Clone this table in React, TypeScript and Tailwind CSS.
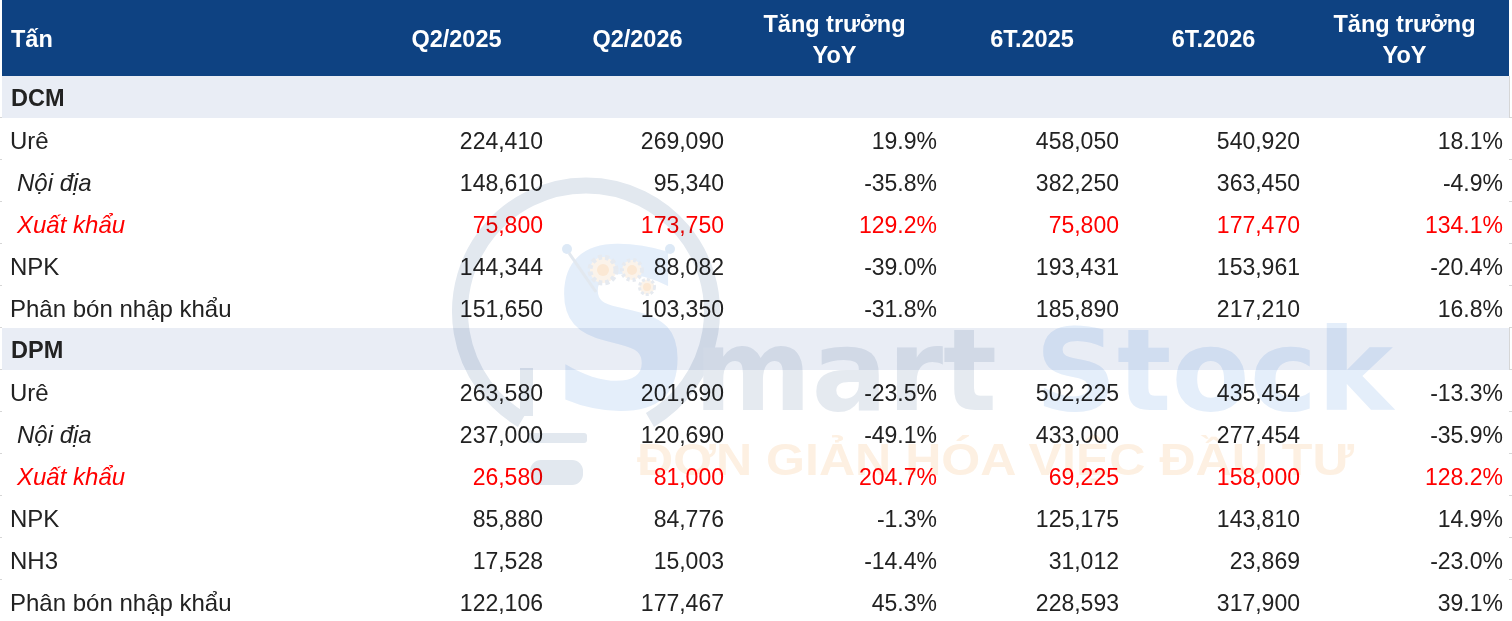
import React from "react";

type Row = {
  label: string;
  vals: string[];
  kind?: "italic" | "red";
};

type Section = { name: string; rows: Row[] };

const sections: Section[] = [
  {
    name: "DCM",
    rows: [
      { label: "Urê", vals: ["224,410", "269,090", "19.9%", "458,050", "540,920", "18.1%"] },
      { label: "Nội địa", kind: "italic", vals: ["148,610", "95,340", "-35.8%", "382,250", "363,450", "-4.9%"] },
      { label: "Xuất khẩu", kind: "red", vals: ["75,800", "173,750", "129.2%", "75,800", "177,470", "134.1%"] },
      { label: "NPK", vals: ["144,344", "88,082", "-39.0%", "193,431", "153,961", "-20.4%"] },
      { label: "Phân bón nhập khẩu", vals: ["151,650", "103,350", "-31.8%", "185,890", "217,210", "16.8%"] },
    ],
  },
  {
    name: "DPM",
    rows: [
      { label: "Urê", vals: ["263,580", "201,690", "-23.5%", "502,225", "435,454", "-13.3%"] },
      { label: "Nội địa", kind: "italic", vals: ["237,000", "120,690", "-49.1%", "433,000", "277,454", "-35.9%"] },
      { label: "Xuất khẩu", kind: "red", vals: ["26,580", "81,000", "204.7%", "69,225", "158,000", "128.2%"] },
      { label: "NPK", vals: ["85,880", "84,776", "-1.3%", "125,175", "143,810", "14.9%"] },
      { label: "NH3", vals: ["17,528", "15,003", "-14.4%", "31,012", "23,869", "-23.0%"] },
      { label: "Phân bón nhập khẩu", vals: ["122,106", "177,467", "45.3%", "228,593", "317,900", "39.1%"] },
    ],
  },
];

const GRID =
  "grid grid-cols-[2px_368px_181px_181px_213px_182px_181px_201px_3px]";

function Tick() {
  return <div className="border-b border-[#d6d6d6]" />;
}

function Header() {
  const cols: { t: React.ReactNode }[] = [
    { t: "Q2/2025" },
    { t: "Q2/2026" },
    { t: (<>Tăng trưởng<br />YoY</>) },
    { t: "6T.2025" },
    { t: "6T.2026" },
    { t: (<>Tăng trưởng<br />YoY</>) },
  ];
  return (
    <div className={`${GRID} h-[76px]`}>
      <div />
      <div className="bg-[#0e4282] text-white font-bold text-[23.5px] flex items-center pl-[9px] pt-[3px]">
        Tấn
      </div>
      {cols.map((c, i) => (
        <div
          key={i}
          className="bg-[#0e4282] text-white font-bold text-[23.5px] leading-[31px] flex items-center justify-center text-center pr-[8px] pt-[3px]"
        >
          <span>{c.t}</span>
        </div>
      ))}
      <div />
    </div>
  );
}

function BandRow({ name }: { name: string }) {
  return (
    <div className={`${GRID} h-[42px]`}>
      <Tick />
      <div className="col-span-7 bg-[#e9edf5] flex items-center pl-[9px] pt-[4px] font-bold text-[23.5px] text-[#222222]">
        {name}
      </div>
      <div className="border-b border-l border-[#d6d6d6]" />
    </div>
  );
}

function DataRow({ row }: { row: Row }) {
  const red = row.kind === "red";
  const italic = row.kind === "italic" || red;
  const color = red ? "text-[#ff0000]" : "text-[#222222]";
  return (
    <div className={`${GRID} h-[42px]`}>
      <Tick />
      <div
        className={`flex items-center pt-[4px] text-[24px] ${color} ${
          italic ? "italic pl-[15px]" : "pl-[8px]"
        }`}
      >
        {row.label}
      </div>
      {row.vals.map((v, i) => (
        <div
          key={i}
          className={`flex items-center justify-end pt-[4px] text-[23px] ${color} ${
            i === 5 ? "pr-[6px]" : "pr-[8px]"
          }`}
        >
          {v}
        </div>
      ))}
      <Tick />
    </div>
  );
}

function Watermark() {
  return (
    <svg
      className="absolute inset-0 pointer-events-none mix-blend-multiply"
      width="1512"
      height="621"
      viewBox="0 0 1512 621"
    >
      {/* bulb ring */}
      <path
        d="M 522 420 A 126 126 0 1 1 650 420"
        fill="none"
        stroke="#e2e8ef"
        strokeWidth="16"
      />
      {/* stem */}
      <rect x="520" y="368" width="13" height="48" fill="#e2e8ef" />
      <rect x="527" y="433" width="60" height="10" rx="3" fill="#e2e8ef" />
      <rect x="530" y="460" width="53" height="25" rx="11" fill="#e2e8ef" />
      {/* big S */}
      <text
        x="550"
        y="408"
        fontFamily="'DejaVu Sans', sans-serif"
        fontWeight="700"
        fontSize="222"
        textLength="142"
        lengthAdjust="spacingAndGlyphs"
        fill="#e4eefa"
      >
        S
      </text>
      {/* dots and line */}
      <circle cx="567" cy="249" r="5" fill="#dde9f6" />
      <circle cx="670" cy="249" r="5" fill="#dde9f6" />
      <line x1="569" y1="253" x2="596" y2="292" stroke="#e2e8ef" strokeWidth="3" />
      {/* gears */}
      <circle cx="603" cy="270" r="13" fill="#fbf3ea" stroke="#e6eaf0" strokeWidth="5" strokeDasharray="4 3" />
      <circle cx="603" cy="270" r="6" fill="#fbe8d4" />
      <circle cx="632" cy="270" r="10" fill="#fbf3ea" stroke="#e6eaf0" strokeWidth="4" strokeDasharray="3 3" />
      <circle cx="632" cy="270" r="5" fill="#fbe8d4" />
      <circle cx="647" cy="287" r="7.5" fill="#fbf3ea" stroke="#e6eaf0" strokeWidth="3" strokeDasharray="3 2" />
      <circle cx="647" cy="287" r="4" fill="#fbe8d4" />
      {/* mart */}
      <text
        x="694"
        y="410"
        fontFamily="'DejaVu Sans', sans-serif"
        fontWeight="700"
        fontSize="114"
        textLength="303"
        lengthAdjust="spacingAndGlyphs"
        fill="#e5eaf0"
      >
        mart
      </text>
      {/* Stock */}
      <text
        x="1035"
        y="410"
        fontFamily="'DejaVu Sans', sans-serif"
        fontWeight="700"
        fontSize="114"
        textLength="358"
        lengthAdjust="spacingAndGlyphs"
        fill="#e4eefa"
      >
        Stock
      </text>
      {/* tagline */}
      <text
        x="637"
        y="475"
        fontFamily="'Liberation Sans', Arial, sans-serif"
        fontWeight="700"
        fontSize="45"
        textLength="717"
        lengthAdjust="spacingAndGlyphs"
        fill="#fdf0e2"
      >
        ĐƠN GIẢN HÓA VIỆC ĐẦU TƯ
      </text>
    </svg>
  );
}

export default function App() {
  return (
    <div className="relative h-[621px] w-[1512px] overflow-hidden bg-white font-['Liberation_Sans',Arial,sans-serif] leading-none">
      <Header />
      {sections.map((s) => (
        <React.Fragment key={s.name}>
          <BandRow name={s.name} />
          {s.rows.map((r, i) => (
            <DataRow key={i} row={r} />
          ))}
        </React.Fragment>
      ))}
      <Watermark />
    </div>
  );
}
